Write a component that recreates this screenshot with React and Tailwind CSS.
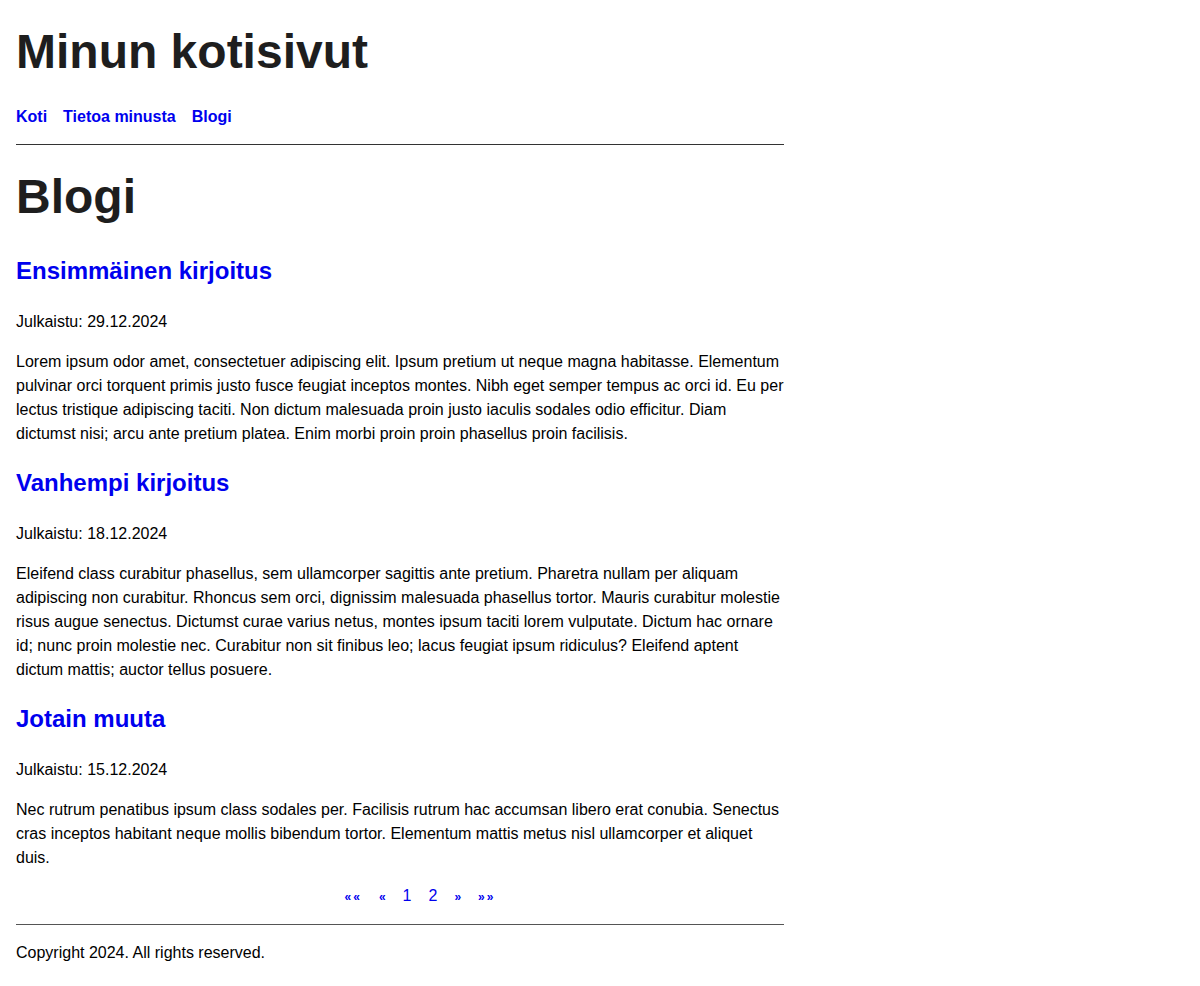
const posts = [
  {
    title: 'Ensimmäinen kirjoitus',
    date: '29.12.2024',
    body: 'Lorem ipsum odor amet, consectetuer adipiscing elit. Ipsum pretium ut neque magna habitasse. Elementum pulvinar orci torquent primis justo fusce feugiat inceptos montes. Nibh eget semper tempus ac orci id. Eu per lectus tristique adipiscing taciti. Non dictum malesuada proin justo iaculis sodales odio efficitur. Diam dictumst nisi; arcu ante pretium platea. Enim morbi proin proin phasellus proin facilisis.',
  },
  {
    title: 'Vanhempi kirjoitus',
    date: '18.12.2024',
    body: 'Eleifend class curabitur phasellus, sem ullamcorper sagittis ante pretium. Pharetra nullam per aliquam adipiscing non curabitur. Rhoncus sem orci, dignissim malesuada phasellus tortor. Mauris curabitur molestie risus augue senectus. Dictumst curae varius netus, montes ipsum taciti lorem vulputate. Dictum hac ornare id; nunc proin molestie nec. Curabitur non sit finibus leo; lacus feugiat ipsum ridiculus? Eleifend aptent dictum mattis; auctor tellus posuere.',
  },
  {
    title: 'Jotain muuta',
    date: '15.12.2024',
    body: 'Nec rutrum penatibus ipsum class sodales per. Facilisis rutrum hac accumsan libero erat conubia. Senectus cras inceptos habitant neque mollis bibendum tortor. Elementum mattis metus nisl ullamcorper et aliquet duis.',
  },
]

export default function App() {
  return (
    <div className="min-h-screen bg-white font-['Liberation_Sans',Arial,sans-serif] text-black">
      <div className="w-[800px] px-4">
        {/* Header */}
        <header>
          <h1 className="pt-[28px] text-[48px] leading-[48px] font-bold text-[#1e1e1e]">Minun kotisivut</h1>
          <nav className="mt-[29px] flex gap-4 text-[16px] leading-6 font-bold text-[#0000ee]">
            <a href="#">Koti</a>
            <a href="#">Tietoa minusta</a>
            <a href="#">Blogi</a>
          </nav>
          <hr className="mt-[15px] border-0 border-t border-[#333]" />
        </header>

        <main>
          <h2 className="mt-[28px] text-[48px] leading-[48px] font-bold text-[#1e1e1e]">Blogi</h2>

          {posts.map((p, i) => (
            <article key={p.title} className={i === 0 ? 'mt-[34px]' : 'mt-[21px]'}>
              <h3 className="text-[24px] leading-8 font-bold text-[#0000ee]">
                <a href="#">{p.title}</a>
              </h3>
              <p className="mt-[23px] text-[16px] leading-6">Julkaistu: {p.date}</p>
              <p className="mt-4 text-[16px] leading-6">{p.body}</p>
            </article>
          ))}

          {/* Pagination */}
          <div className="mt-[14px] flex items-baseline justify-center gap-[17px] pl-10 leading-6 text-[#0000ee]">
            <a href="#" className="text-[12px] font-bold tracking-[2px]">««</a>
            <a href="#" className="text-[12px] font-bold">«</a>
            <a href="#" className="text-[16px]">1</a>
            <a href="#" className="text-[16px]">2</a>
            <a href="#" className="text-[12px] font-bold">»</a>
            <a href="#" className="text-[12px] font-bold tracking-[2px]">»»</a>
          </div>
        </main>

        <footer>
          <hr className="mt-[15px] border-0 border-t border-[#555]" />
          <p className="mt-4 text-[16px] leading-6">Copyright 2024. All rights reserved.</p>
        </footer>
      </div>
    </div>
  )
}
